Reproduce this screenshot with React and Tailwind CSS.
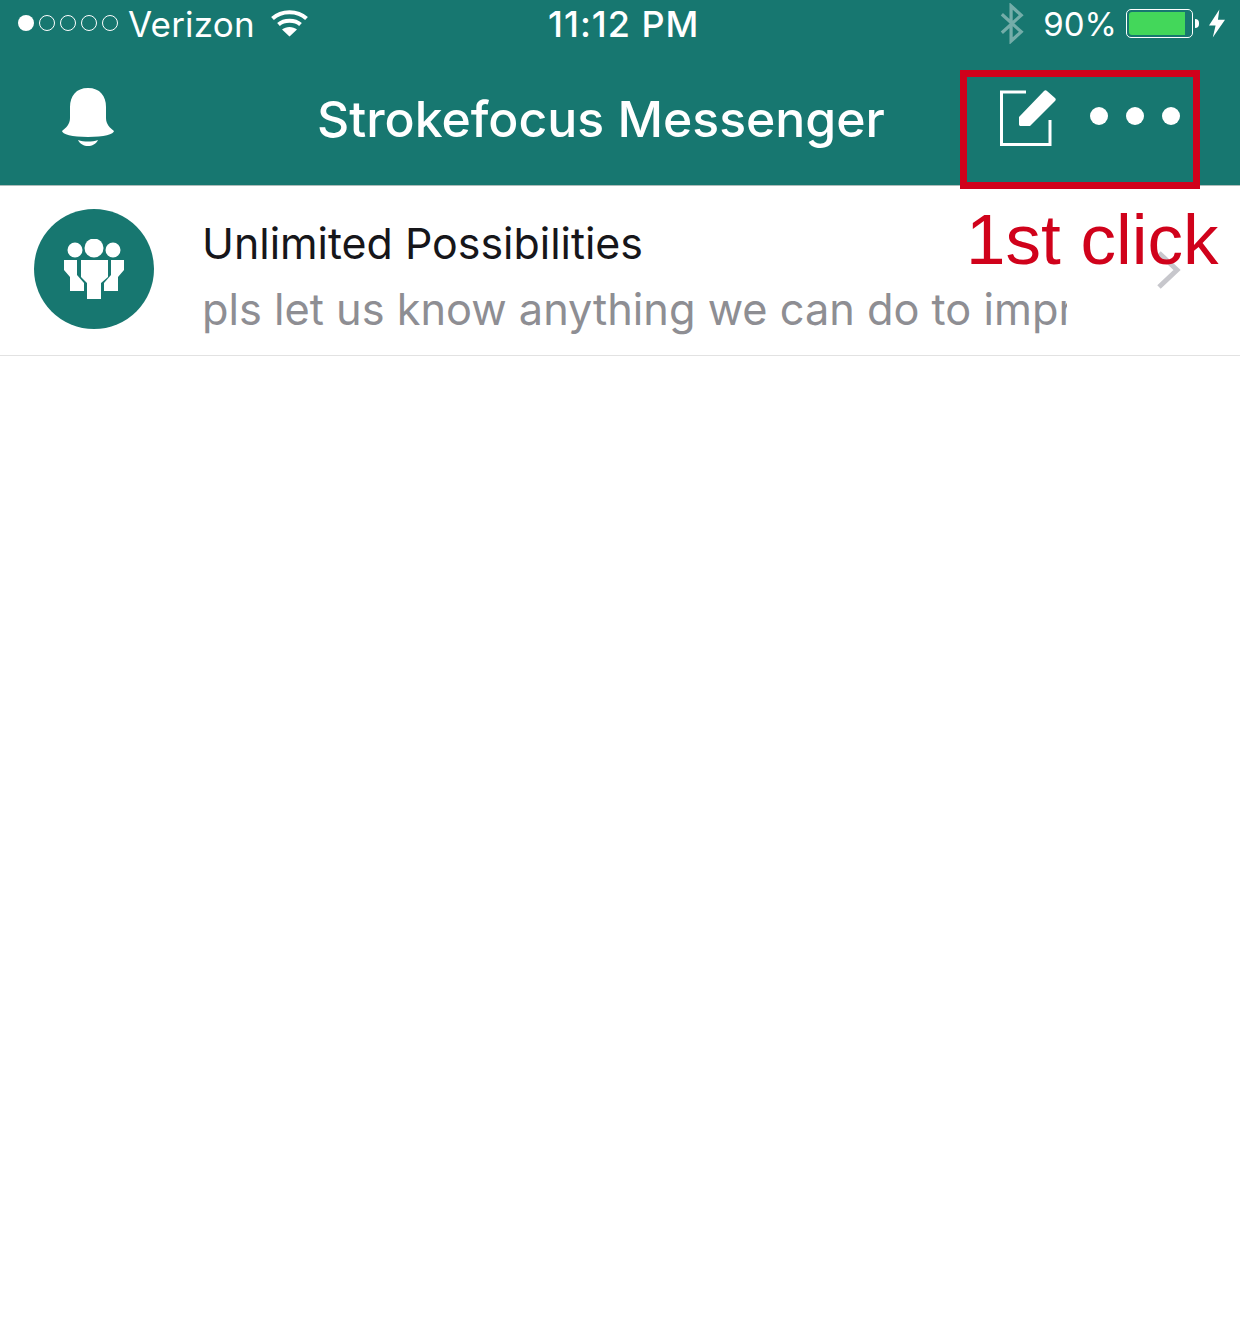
export default function App() {
  return (
    <div className="relative h-[1328px] w-[1240px] overflow-hidden bg-white font-['Inter',sans-serif]">
      <header className="h-[186px] border-b border-[#aebdbb] bg-[#177770] text-white">
        <div className="relative flex h-[50px] items-center">
          <div className="ml-[18px] mb-[4px] flex gap-[5px]">
            <span className="h-4 w-4 rounded-full bg-white" />
            {[0, 1, 2, 3].map((i) => (
              <span key={i} className="h-4 w-4 rounded-full border border-white" />
            ))}
          </div>
          <span className="ml-[10px] mb-[2px] text-[35px] leading-none tracking-[0.2px]">Verizon</span>
          <svg className="ml-[16px] mb-[4px]" width="37" height="27" viewBox="0 0 37 27" fill="none">
            <path d="M1.5 8.5C10.5 0 26.5 0 35.5 8.5" stroke="white" strokeWidth="4" />
            <path d="M7.5 14.5C13 9.5 24 9.5 29.5 14.5" stroke="white" strokeWidth="4" />
            <path d="M11 19.5 L18.5 26.5 L26 19.5 C22 16 15 16 11 19.5 Z" fill="white" />
          </svg>
          <span className="absolute left-[548px] top-[6px] text-[36px] font-medium leading-9 tracking-[1px]">11:12 PM</span>
          <svg className="ml-auto mr-[19px] mb-[3px]" width="24" height="41" viewBox="0 0 26 42" fill="none" opacity="0.4">
            <path d="M2 11 L23 30 L12 40 V2 L23 12 L2 31" stroke="white" strokeWidth="3.5" />
          </svg>
          <span className="mr-[9px] mb-[2px] text-[33px] leading-none">90%</span>
          <div className="mb-[4px] flex items-center">
            <div className="flex h-[29px] w-[67px] rounded-[5px] border border-white p-[2px]">
              <div className="h-full w-[56px] rounded-l-[3px] bg-[#43d75a]" />
            </div>
            <span className="ml-[2px] h-[9px] w-[4px] rounded-r-full bg-white" />
          </div>
          <svg className="ml-[10px] mr-[15px] mb-[4px]" width="16" height="29" viewBox="0 0 17 30">
            <path d="M11 0 L0 17 H7 L4 30 L17 11 H9.5 Z" fill="white" />
          </svg>
        </div>
        <div className="relative flex h-[135px] items-start">
          <svg className="ml-[62px] mt-[38px]" width="52" height="58" viewBox="0 0 52 58">
            <path d="M26 0C38 0 44 8 44 19V30C44 36 48 40 52 43C52 46 42 49 26 49C10 49 0 46 0 43C4 40 8 36 8 30V19C8 8 14 0 26 0Z" fill="white" />
            <path d="M16 52C22 54 30 54 36 52C34 56 30 58 26 58C22 58 18 56 16 52Z" fill="white" />
          </svg>
          <h1 className="absolute left-[317px] top-[39px] text-[49.9px] font-medium leading-[60px]">Strokefocus Messenger</h1>
          <svg className="ml-auto mt-[40px]" width="56" height="56" viewBox="0 0 56 56" fill="none">
            <path d="M26 2H1.5V54.5H50V30" stroke="white" strokeWidth="3" />
            <path d="M19 27 L44 1 C45 0 46 0 47 1 L55 8 C56 9 56 10 55 11 L30 36 H21 C19.5 36 19 35.5 19 34 Z" fill="white" />
          </svg>
          <div className="ml-[34px] mr-[60px] mt-[57px] flex gap-[18px]">
            <span className="h-[18px] w-[18px] rounded-full bg-white" />
            <span className="h-[18px] w-[18px] rounded-full bg-white" />
            <span className="h-[18px] w-[18px] rounded-full bg-white" />
          </div>
        </div>
      </header>
      <div className="flex h-[170px] items-start border-b border-[#e2e2e2] pl-[34px]">
        <div className="mt-[23px] flex h-[120px] w-[120px] shrink-0 items-center justify-center rounded-full bg-[#177770]">
          <svg width="60" height="60" viewBox="0 0 60 60" fill="white">
            <circle cx="11" cy="11" r="7.5" />
            <circle cx="30" cy="9" r="9.500" />
            <circle cx="49" cy="11" r="7.5" />
            <path d="M0 21H13V36L20 44V52H6V38L0 31Z" />
            <path d="M60 21H47V36L40 44V52H54V38L60 31Z" />
            <path d="M17 21H44V38L37 44V60H23V44L17 38Z" />
          </svg>
        </div>
        <div className="ml-[49px] mt-[24px] w-[864px] overflow-hidden">
          <div className="-ml-px text-[42.9px] leading-[66px] text-[#16161a]">Unlimited Possibilities</div>
          <div className="-ml-px whitespace-nowrap text-[43.3px] leading-[66px] text-[#8e8e93]">pls let us know anything we can do to improve</div>
        </div>
      </div>
      <svg className="absolute left-[1155px] top-[250px]" width="28" height="40" viewBox="0 0 28 40" fill="none">
        <path d="M4 3 L22 20 L4 37" stroke="#c7c7cc" strokeWidth="5" />
      </svg>
      <div className="absolute left-[960px] top-[70px] h-[119px] w-[240px] border-[7px] border-[#d0021b]" />
      <div className="absolute left-[966px] top-[200px] font-['Liberation_Sans',sans-serif] text-[71px] leading-[80px] text-[#d0021b]">1st click</div>
    </div>
  );
}
